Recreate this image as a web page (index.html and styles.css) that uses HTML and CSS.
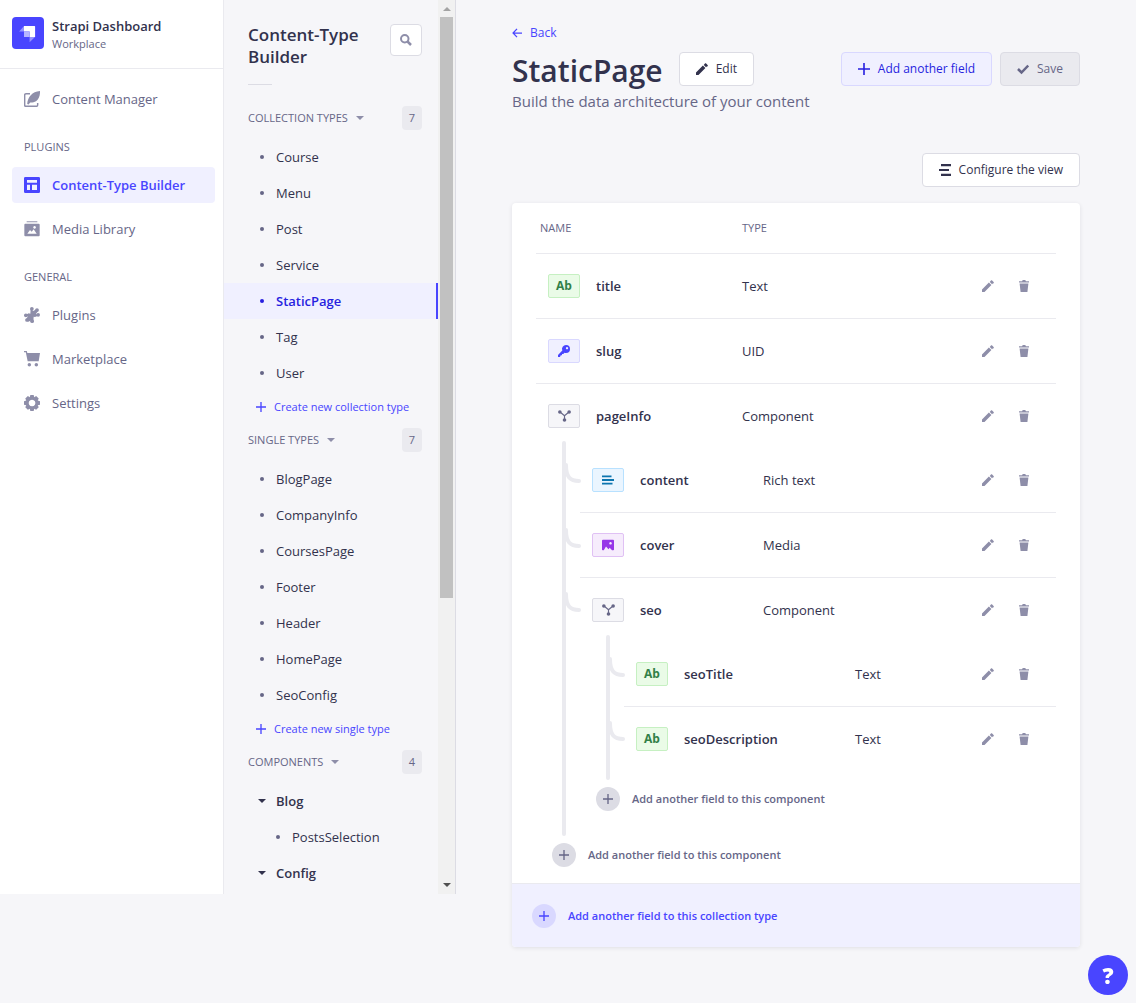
FILE: index.html
```html
<!DOCTYPE html>
<html lang="en">
<head>
<meta charset="utf-8">
<meta name="viewport" content="width=device-width, initial-scale=1">
<title>Content-Type Builder</title>
<link rel="stylesheet" href="styles.css">
</head>
<body>
<svg class="sprite" aria-hidden="true">
  <symbol id="i-plus" viewBox="0 0 24 24"><path d="M24 13.6H13.6V24h-3.2V13.6H0v-3.2h10.4V0h3.2v10.4H24z"/></symbol>
  <symbol id="i-pencil" viewBox="0 0 24 24"><path d="M0 19V24h5L18.800 10.200l-5-5zM21.500 7a2 2 0 0 0 1.900-1.200 1.600 1.600 0 0 0-.2-2L20.300.8a1.600 1.600 0 0 0-2-.2L15.500 3.900 20.100 8.500z"/></symbol>
  <symbol id="i-trash" viewBox="0 0 24 24"><path d="M2 2.600h6.200L9.400 0h5.200l1.200 2.600H22v2.200H2zM3.200 7.200h17.600L18.800 24H5.200z"/></symbol>
  <symbol id="i-caret" viewBox="0 0 8 4"><path d="M0 0h8L4 4z"/></symbol>
  <symbol id="i-node" viewBox="0 0 26 24"><path d="M4 4l9 7.500L22 4M13 11.500V20" fill="none" stroke="currentColor" stroke-width="2.400"/><circle cx="3.700" cy="4" r="3.600"/><circle cx="22.300" cy="4" r="3.600"/><circle cx="13" cy="20" r="3.600"/></symbol>
</svg>
<div class="app">
  <nav class="nav" aria-label="Main">
    <div class="brand">
      <svg class="logo" viewBox="0 0 32 32" aria-hidden="true"><rect width="32" height="32" rx="4" fill="#4945ff"/><path d="M12 9h10.500a.6.6 0 0 1 .6.6V20H17.600v-5.400H12z" fill="#fff"/><path d="M12 9v5.500H7.100zM17.600 20h5.400l-5.400 5.200z" fill="#9593ff"/><path d="M12 14.500h5.600V20H12z" fill="#b6b5ff"/></svg>
      <div class="brand-text">
        <div class="brand-name">Strapi Dashboard</div>
        <div class="brand-sub">Workplace</div>
      </div>
    </div>
    <div class="nav-body">
      <a class="nav-link" href="#"><svg viewBox="0 0 24 24" aria-hidden="true"><path d="M9 4H3a2 2 0 0 0-2 2v15a2 2 0 0 0 2 2h15.500a2 2 0 0 0 2-2V18" fill="none" stroke="currentColor" stroke-width="2.200"/><path d="M24 0c.4 6-1.500 12.500-6 15.500-2.600 1.700-5.600 2-8.600 1.900L6.800 20.300 4.800 19.600C5.500 9 12 1 24 0z"/></svg>Content Manager</a>
      <h2 class="nav-label">Plugins</h2>
      <div class="nav-group">
        <a class="nav-link active" href="#" aria-current="page"><svg viewBox="0 0 24 24" aria-hidden="true"><path fill-rule="evenodd" d="M2 0h20a2 2 0 0 1 2 2v20a2 2 0 0 1-2 2H2a2 2 0 0 1-2-2V2a2 2 0 0 1 2-2zM4.500 4.500v4h15v-4zM4.500 11.500v8H9v-8zM12 11.500v8h7.500v-8z"/></svg>Content-Type Builder</a>
        <a class="nav-link" href="#"><svg viewBox="0 0 24 24" aria-hidden="true"><path d="M4 0h16v2H4z" opacity=".7"/><path fill-rule="evenodd" d="M2 4h20a1.500 1.500 0 0 1 1.500 1.500v16A1.500 1.500 0 0 1 22 23H2A1.500 1.500 0 0 1 .5 21.500v-16A1.500 1.500 0 0 1 2 4zM5 19h14l-4.500-6.500-3 3.500L9 13.500zM15.800 7.500a2 2 0 1 0 .1 0z"/></svg>Media Library</a>
      </div>
      <h2 class="nav-label">General</h2>
      <div class="nav-group">
        <a class="nav-link" href="#"><svg viewBox="0 0 24 24" aria-hidden="true"><path d="M10 3l4 3 5-3 2.500 2.500L18 10l3 3-4.500 2-2-.5L14 21l-4-.5L6 22l-3.500-3 3-4.500-2.500-3 4-2 2.500.5z"/><circle cx="11.800" cy="2.800" r="2.800"/><circle cx="19.500" cy="4.500" r="2.800"/><circle cx="21.200" cy="11.800" r="2.800"/><circle cx="2.800" cy="12.500" r="2.800"/><circle cx="4.500" cy="19.500" r="2.800"/><circle cx="12.200" cy="21.200" r="2.800"/></svg>Plugins</a>
        <a class="nav-link" href="#"><svg viewBox="0 0 24 24" aria-hidden="true"><path d="M0 0h4.200l.8 3h19L22 15.500H5.500L2.700 2H0z"/><circle cx="8" cy="20.500" r="2.600"/><circle cx="18.500" cy="20.500" r="2.600"/></svg>Marketplace</a>
        <a class="nav-link" href="#"><svg viewBox="0 0 24 24" aria-hidden="true"><path fill-rule="evenodd" d="M9.500 0h5l.8 3.200 2.900-1.700 3.900 3.900-1.500 3 3.400.9v5.200l-3.400.9 1.500 3-3.900 3.900-2.900-1.600-.8 3.200h-5l-.8-3.200-2.900 1.600-3.900-3.900 1.500-3L0 14.500V9.300l3.400-.9-1.500-3 3.900-3.900 2.900 1.700zM12 7a5 5 0 1 0 .1 0z"/></svg>Settings</a>
      </div>
    </div>
  </nav>

  <aside class="subnav" aria-label="Content-Type Builder">
    <div class="subnav-body">
      <div class="subnav-head">
        <h2>Content-Type Builder</h2>
        <button class="search" type="button" aria-label="Search"><svg viewBox="0 0 24 24" aria-hidden="true"><circle cx="9.500" cy="9.500" r="7.500" fill="none" stroke="currentColor" stroke-width="4"/><path d="M15 15l7 7" stroke="currentColor" stroke-width="5"/></svg></button>
      </div>
      <div class="rule"></div>
      <section>
        <h3 class="group"><button type="button">Collection Types<svg aria-hidden="true"><use href="#i-caret"/></svg></button><span class="count">7</span></h3>
        <ul>
          <li><a href="#">Course</a></li>
          <li><a href="#">Menu</a></li>
          <li><a href="#">Post</a></li>
          <li><a href="#">Service</a></li>
          <li><a class="current" href="#">StaticPage</a></li>
          <li><a href="#">Tag</a></li>
          <li><a href="#">User</a></li>
        </ul>
        <button class="create" type="button"><svg aria-hidden="true"><use href="#i-plus"/></svg>Create new collection type</button>
      </section>
      <section>
        <h3 class="group"><button type="button">Single Types<svg aria-hidden="true"><use href="#i-caret"/></svg></button><span class="count">7</span></h3>
        <ul>
          <li><a href="#">BlogPage</a></li>
          <li><a href="#">CompanyInfo</a></li>
          <li><a href="#">CoursesPage</a></li>
          <li><a href="#">Footer</a></li>
          <li><a href="#">Header</a></li>
          <li><a href="#">HomePage</a></li>
          <li><a href="#">SeoConfig</a></li>
        </ul>
        <button class="create" type="button"><svg aria-hidden="true"><use href="#i-plus"/></svg>Create new single type</button>
      </section>
      <section>
        <h3 class="group"><button type="button">Components<svg aria-hidden="true"><use href="#i-caret"/></svg></button><span class="count">4</span></h3>
        <button class="folder" type="button"><svg aria-hidden="true"><use href="#i-caret"/></svg>Blog</button>
        <ul class="deep">
          <li><a href="#">PostsSelection</a></li>
        </ul>
        <button class="folder" type="button"><svg aria-hidden="true"><use href="#i-caret"/></svg>Config</button>
      </section>
    </div>
    <div class="scrollbar" aria-hidden="true">
      <svg class="arrow up" viewBox="0 0 8 4"><path d="M0 4h8L4 0z"/></svg>
      <div class="track"><div class="thumb"></div></div>
      <svg class="arrow" viewBox="0 0 8 4"><path d="M0 0h8L4 4z"/></svg>
    </div>
  </aside>

  <main class="main">
    <a class="back" href="#"><svg viewBox="0 0 24 24" aria-hidden="true"><path d="M24 12H3M12 2L2.500 12 12 22" fill="none" stroke="currentColor" stroke-width="3"/></svg>Back</a>
    <header class="title-row">
      <h1>StaticPage</h1>
      <button class="btn" type="button"><svg aria-hidden="true"><use href="#i-pencil"/></svg>Edit</button>
      <div class="title-actions">
        <button class="btn add" type="button"><svg aria-hidden="true"><use href="#i-plus"/></svg>Add another field</button>
        <button class="btn save" type="button" disabled><svg viewBox="0 0 24 24" aria-hidden="true"><path d="M2 12l7 7L22.500 5" fill="none" stroke="currentColor" stroke-width="5"/></svg>Save</button>
      </div>
    </header>
    <p class="lead">Build the data architecture of your content</p>
    <div class="toolbar">
      <button class="btn" type="button"><svg viewBox="0 0 24 24" aria-hidden="true"><path d="M4 0h20v4.400H4zM0 9.800h20v4.400H0zM4 19.600h20V24H4z"/></svg>Configure the view</button>
    </div>

    <div class="card">
      <div class="card-body">
        <table class="fields">
          <colgroup><col class="c-name"><col><col class="c-act"></colgroup>
          <thead><tr><th scope="col">Name</th><th scope="col">Type</th><td></td></tr></thead>
          <tbody>
            <tr>
              <td><div class="name"><span class="badge text">Ab</span>title</div></td><td>Text</td>
              <td><div class="acts"><button type="button" aria-label="Edit title"><svg aria-hidden="true"><use href="#i-pencil"/></svg></button><button type="button" aria-label="Delete title"><svg aria-hidden="true"><use href="#i-trash"/></svg></button></div></td>
            </tr>
            <tr>
              <td><div class="name"><span class="badge uid"><svg viewBox="0 0 24 24" aria-hidden="true"><path fill-rule="evenodd" d="M16 0a8 8 0 0 1 0 16 8 8 0 0 1-3-.6L10.500 18H8v2.500H5.500L4 24H0v-4L8.600 11A8 8 0 0 1 16 0zM18 3.800a2.300 2.300 0 1 0 .1 0z"/></svg></span>slug</div></td><td>UID</td>
              <td><div class="acts"><button type="button" aria-label="Edit slug"><svg aria-hidden="true"><use href="#i-pencil"/></svg></button><button type="button" aria-label="Delete slug"><svg aria-hidden="true"><use href="#i-trash"/></svg></button></div></td>
            </tr>
            <tr class="parent">
              <td><div class="name"><span class="badge comp"><svg class="wide" aria-hidden="true"><use href="#i-node"/></svg></span>pageInfo</div></td><td>Component</td>
              <td><div class="acts"><button type="button" aria-label="Edit pageInfo"><svg aria-hidden="true"><use href="#i-pencil"/></svg></button><button type="button" aria-label="Delete pageInfo"><svg aria-hidden="true"><use href="#i-trash"/></svg></button></div></td>
            </tr>
            <tr class="children">
              <td colspan="3">
                <div class="branch">
                  <div class="stem"></div>
                  <table class="fields level-1">
                    <colgroup><col class="c-curve"><col class="c-name"><col><col class="c-act"></colgroup>
                    <tbody>
                      <tr>
                        <td class="curve"><svg viewBox="0 0 15 24" aria-hidden="true"><path d="M0-4C0 8 4 12 13 12"/></svg></td>
                        <td><div class="name"><span class="badge rich"><svg viewBox="0 0 24 24" aria-hidden="true"><path d="M0 3h19v3.600H0zM0 10.200h24v3.600H0zM0 17.400h21V21H0z"/></svg></span>content</div></td><td>Rich text</td>
                        <td><div class="acts"><button type="button" aria-label="Edit content"><svg aria-hidden="true"><use href="#i-pencil"/></svg></button><button type="button" aria-label="Delete content"><svg aria-hidden="true"><use href="#i-trash"/></svg></button></div></td>
                      </tr>
                      <tr>
                        <td class="curve"><svg viewBox="0 0 15 24" aria-hidden="true"><path d="M0-4C0 8 4 12 13 12"/></svg></td>
                        <td><div class="name"><span class="badge media"><svg viewBox="0 0 24 24" aria-hidden="true"><path fill-rule="evenodd" d="M2 1.500h20a2 2 0 0 1 2 2V21a1.500 1.500 0 0 1-1.500 1.500H20l-4.500-5-2.500 3L8 15l-4.500 7.500H1.500A1.500 1.500 0 0 1 0 21V3.500a2 2 0 0 1 2-2zM17 6a2.600 2.600 0 1 0 .1 0z"/></svg></span>cover</div></td><td>Media</td>
                        <td><div class="acts"><button type="button" aria-label="Edit cover"><svg aria-hidden="true"><use href="#i-pencil"/></svg></button><button type="button" aria-label="Delete cover"><svg aria-hidden="true"><use href="#i-trash"/></svg></button></div></td>
                      </tr>
                      <tr class="parent">
                        <td class="curve"><svg viewBox="0 0 15 24" aria-hidden="true"><path d="M0-4C0 8 4 12 13 12"/></svg></td>
                        <td><div class="name"><span class="badge comp"><svg class="wide" aria-hidden="true"><use href="#i-node"/></svg></span>seo</div></td><td>Component</td>
                        <td><div class="acts"><button type="button" aria-label="Edit seo"><svg aria-hidden="true"><use href="#i-pencil"/></svg></button><button type="button" aria-label="Delete seo"><svg aria-hidden="true"><use href="#i-trash"/></svg></button></div></td>
                      </tr>
                      <tr class="children">
                        <td></td>
                        <td colspan="3">
                          <div class="branch">
                            <div class="stem"></div>
                            <table class="fields level-2">
                              <colgroup><col class="c-curve"><col class="c-name"><col><col class="c-act"></colgroup>
                              <tbody>
                                <tr>
                                  <td class="curve"><svg viewBox="0 0 15 24" aria-hidden="true"><path d="M0-4C0 8 4 12 13 12"/></svg></td>
                                  <td><div class="name"><span class="badge text">Ab</span>seoTitle</div></td><td>Text</td>
                                  <td><div class="acts"><button type="button" aria-label="Edit seoTitle"><svg aria-hidden="true"><use href="#i-pencil"/></svg></button><button type="button" aria-label="Delete seoTitle"><svg aria-hidden="true"><use href="#i-trash"/></svg></button></div></td>
                                </tr>
                                <tr class="last">
                                  <td class="curve"><svg viewBox="0 0 15 24" aria-hidden="true"><path d="M0-4C0 8 4 12 13 12"/></svg></td>
                                  <td><div class="name"><span class="badge text">Ab</span>seoDescription</div></td><td>Text</td>
                                  <td><div class="acts"><button type="button" aria-label="Edit seoDescription"><svg aria-hidden="true"><use href="#i-pencil"/></svg></button><button type="button" aria-label="Delete seoDescription"><svg aria-hidden="true"><use href="#i-trash"/></svg></button></div></td>
                                </tr>
                              </tbody>
                            </table>
                          </div>
                          <button class="more inner" type="button"><span class="disc"><svg aria-hidden="true"><use href="#i-plus"/></svg></span>Add another field to this component</button>
                        </td>
                      </tr>
                    </tbody>
                  </table>
                </div>
                <button class="more" type="button"><span class="disc"><svg aria-hidden="true"><use href="#i-plus"/></svg></span>Add another field to this component</button>
              </td>
            </tr>
          </tbody>
        </table>
      </div>
      <button class="card-foot" type="button"><span class="disc"><svg aria-hidden="true"><use href="#i-plus"/></svg></span>Add another field to this collection type</button>
    </div>
  </main>
</div>
<button class="help" type="button" aria-label="Help">?</button>
</body>
</html>
```
FILE: styles.css
```css
:root {
  --primary: #4945ff;
  --primary-dark: #271fe0;
  --primary-bg: #f0f0ff;
  --primary-line: #d9d8ff;
  --ink: #32324d;
  --muted: #666687;
  --soft: #8e8ea9;
  --line: #eaeaef;
  --line-dark: #dcdce4;
  --bg: #f6f6f9;
  --rail-height: calc(100vh - 109px);
}

* { box-sizing: border-box; }

body {
  margin: 0;
  background: var(--bg);
  color: var(--ink);
  font: 13px/20px "Open Sans", "Noto Sans", sans-serif;
}

h1, h2, h3, p, ul { margin: 0; padding: 0; font-weight: 400; }
ul { list-style: none; }
a { color: inherit; text-decoration: none; }
button {
  margin: 0;
  padding: 0;
  border: 0;
  background: none;
  color: inherit;
  font: inherit;
  text-align: left;
  white-space: nowrap;
  cursor: pointer;
}
svg { display: block; flex: none; fill: currentColor; }
.sprite { position: absolute; width: 0; height: 0; }

.app { display: flex; align-items: flex-start; }

/* Main navigation */
.nav {
  flex: none;
  width: 224px;
  height: var(--rail-height);
  background: #fff;
  border-right: 1px solid var(--line);
}
.brand {
  display: flex;
  align-items: center;
  gap: 8px;
  height: 69px;
  padding: 0 12px 2px;
  border-bottom: 1px solid var(--line);
}
.logo { width: 32px; height: 32px; }
.brand-text { padding-top: 3px; line-height: 18px; }
.brand-name { font-weight: 600; }
.brand-sub { font-size: 11px; color: var(--muted); }
.nav-body { padding: 12px 8px 12px 12px; }
.nav-group { display: grid; gap: 8px; }
.nav-link {
  display: flex;
  align-items: center;
  gap: 12px;
  height: 36px;
  padding: 0 12px;
  border-radius: 4px;
  color: var(--muted);
}
.nav-link svg { width: 16px; height: 16px; color: var(--soft); }
.nav-link.active { background: var(--primary-bg); color: var(--primary); font-weight: 600; }
.nav-link.active svg { color: var(--primary); }
.nav-label {
  padding: 22px 12px 12px;
  color: var(--muted);
  font-size: 11px;
  font-weight: 500;
  line-height: 16px;
  text-transform: uppercase;
}

/* Content type list */
.subnav {
  display: flex;
  flex: none;
  width: 232px;
  height: var(--rail-height);
  border-right: 1px solid var(--line-dark);
}
.subnav-body { flex: 1; min-width: 0; overflow: hidden; padding-top: 24px; }
.subnav-head {
  display: flex;
  align-items: flex-start;
  justify-content: space-between;
  padding: 0 16px 0 24px;
}
.subnav-head h2 { font-size: 17px; font-weight: 600; line-height: 22px; }
.search {
  display: grid;
  place-items: center;
  flex: none;
  width: 32px;
  height: 32px;
  border: 1px solid var(--line-dark);
  border-radius: 4px;
  background: #fff;
  color: var(--soft);
}
.search svg { width: 12px; height: 12px; }
.rule { width: 24px; height: 1px; margin: 16px 0 21px 24px; background: var(--line-dark); }
.group {
  display: flex;
  align-items: center;
  justify-content: space-between;
  height: 24px;
  margin-bottom: 9px;
  padding: 0 16px 0 24px;
  color: var(--muted);
  font-size: 11px;
  font-weight: 500;
}
.group button { display: flex; align-items: center; gap: 8px; text-transform: uppercase; }
.group svg { width: 8px; height: 4px; color: var(--soft); }
.count {
  width: 20px;
  border-radius: 4px;
  background: var(--line);
  line-height: 24px;
  text-align: center;
}
.subnav li a {
  display: flex;
  align-items: center;
  height: 36px;
  padding-left: 36px;
}
.subnav li a::before {
  width: 4px;
  height: 4px;
  margin-right: 12px;
  border-radius: 50%;
  background: var(--muted);
  content: "";
}
.subnav li a.current {
  border-right: 2px solid var(--primary);
  background: var(--primary-bg);
  color: var(--primary-dark);
  font-weight: 600;
}
.subnav li a.current::before { background: var(--primary-dark); }
.subnav .deep li a { padding-left: 52px; }
.create {
  display: flex;
  align-items: center;
  gap: 8px;
  height: 32px;
  margin-bottom: 5px;
  padding-left: 32px;
  color: var(--primary);
  font-size: 11px;
}
.create svg { width: 10px; height: 10px; }
.folder {
  display: flex;
  align-items: center;
  gap: 10px;
  width: 100%;
  height: 36px;
  padding-left: 34px;
  font-weight: 600;
}
.folder svg { width: 8px; height: 4px; }
.scrollbar {
  display: flex;
  flex-direction: column;
  align-items: center;
  justify-content: space-between;
  flex: none;
  width: 17px;
  padding: 7px 0;
  background: #f1f1f1;
}
.track { flex: 1; width: 13px; margin: 6px 0; }
.thumb { height: 67.5%; background: #c1c1c1; }
.arrow { width: 8px; height: 4px; color: #505050; }
.arrow.up { color: #a3a3a3; }

/* Page */
.main { flex: 1; min-width: 0; padding: 24px 56px 56px; }
.back {
  display: flex;
  align-items: center;
  gap: 8px;
  width: max-content;
  height: 18px;
  color: var(--primary);
  font-size: 12px;
}
.back svg { width: 10px; height: 10px; }
.title-row { display: flex; align-items: center; height: 34px; margin-top: 10px; }
h1 { margin-right: 16px; padding-top: 4px; font-size: 30px; font-weight: 600; line-height: 34px; }
.title-actions { display: flex; gap: 8px; margin-left: auto; }
.btn {
  display: flex;
  align-items: center;
  gap: 8px;
  height: 34px;
  padding: 0 16px;
  border: 1px solid var(--line-dark);
  border-radius: 4px;
  background: #fff;
  font-size: 12px;
  font-weight: 500;
}
.btn svg { width: 12px; height: 12px; }
.btn.add { border-color: var(--primary-line); background: var(--primary-bg); color: var(--primary-dark); }
.btn.save { background: var(--line); color: var(--muted); cursor: default; }
.lead { margin-top: 3px; color: var(--muted); font-size: 15px; line-height: 24px; }
.toolbar { display: flex; justify-content: flex-end; margin: 40px 0 16px; }

/* Field table */
.card { border-radius: 4px; background: #fff; box-shadow: 0 1px 4px rgba(33, 33, 52, .1); }
.card-body { padding: 0 24px 16px; }
.fields { width: 100%; border-collapse: separate; border-spacing: 0; table-layout: fixed; }
.fields td, .fields th { padding: 0; border-bottom: 1px solid var(--line); text-align: left; }
.fields td { height: 65px; }
.fields thead th, .fields thead td { height: 51px; color: var(--muted); font-size: 11px; font-weight: 500; text-transform: uppercase; }
.fields th:first-child { padding-left: 4px; }
.c-name { width: 206px; }
.c-act { width: 82px; }
.c-curve { width: 14px; }
.level-1 .c-name { width: 183px; }
.level-2 .c-name { width: 231px; }
.fields .parent > td { height: 57px; padding-top: 7px; border-bottom: 0; }
.fields .children > td { height: auto; border-bottom: 0; }
.fields .last > td { height: 64px; border-bottom: 0; }
.fields td.curve { border-bottom: 0; }
.curve svg {
  width: 15px;
  height: 24px;
  margin-right: -1px;
  overflow: visible;
  fill: none;
  stroke: var(--line);
  stroke-width: 4;
  stroke-linecap: round;
}
.name { display: flex; align-items: center; gap: 16px; padding-left: 12px; font-weight: 600; }
.badge {
  display: grid;
  place-items: center;
  width: 32px;
  height: 24px;
  border: 1px solid;
  border-radius: 2px;
  font-size: 12px;
  font-weight: 700;
  line-height: 22px;
}
.badge svg { width: 12px; height: 12px; }
.badge svg.wide { width: 13px; }
.badge.text { border-color: #c6f0c2; background: #eafbe7; color: #328048; }
.badge.uid { border-color: var(--primary-line); background: var(--primary-bg); color: var(--primary); }
.badge.comp { border-color: var(--line-dark); background: var(--bg); color: var(--muted); }
.badge.rich { border-color: #b8e1ff; background: #eaf5ff; color: #0c75af; }
.badge.media { border-color: #e0c1f4; background: #f6ecfc; color: #9736e8; }
.acts { display: flex; gap: 12px; justify-content: flex-end; padding-right: 20px; color: var(--soft); }
.acts button { display: grid; place-items: center; width: 24px; height: 24px; }
.acts svg { width: 12px; height: 12px; }
.branch { display: flex; padding-left: 26px; }
.branch .fields { flex: 1; min-width: 0; margin-top: 7px; }
.branch .level-2 { margin-bottom: 9px; }
.stem { flex: none; width: 4px; border-radius: 2px; background: var(--line); }
.more {
  display: flex;
  align-items: center;
  gap: 12px;
  margin-top: 7px;
  padding-left: 16px;
  color: var(--muted);
  font-size: 11px;
  font-weight: 600;
}
.more.inner { margin-bottom: 25px; }
.disc {
  display: grid;
  place-items: center;
  width: 24px;
  height: 24px;
  border-radius: 50%;
  background: var(--line-dark);
}
.disc svg { width: 10px; height: 10px; }
.card-foot {
  display: flex;
  align-items: center;
  gap: 12px;
  width: 100%;
  height: 64px;
  padding: 0 20px;
  border-top: 1px solid var(--line);
  border-radius: 0 0 4px 4px;
  background: var(--primary-bg);
  color: var(--primary);
  font-size: 11px;
  font-weight: 600;
}
.card-foot .disc { background: var(--primary-line); }

.help {
  position: fixed;
  right: 8px;
  bottom: 8px;
  width: 40px;
  height: 40px;
  border-radius: 50%;
  background: var(--primary);
  color: #fff;
  font-size: 22px;
  font-weight: 800;
  line-height: 40px;
  text-align: center;
}
```
